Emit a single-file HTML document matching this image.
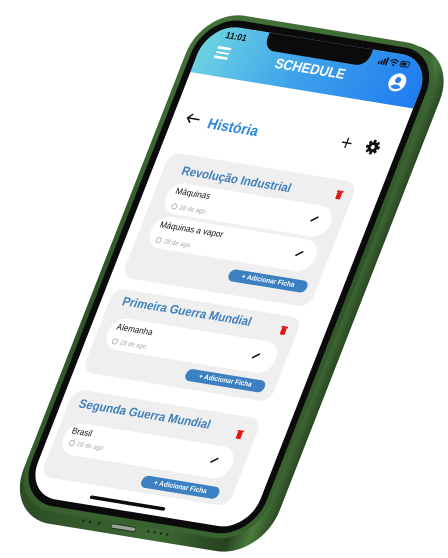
<!DOCTYPE html>
<html><head><meta charset="utf-8"><style>
html,body{margin:0;padding:0;background:#fff;}
body{width:448px;height:557px;overflow:hidden;position:relative;font-family:"Liberation Sans",Arial,sans-serif;}
#ph{position:absolute;left:0;top:0;width:282px;height:555px;transform:matrix(0.79,0.129,-0.332,0.85,209.6,22.8);transform-origin:0 0;}
.a{position:absolute;}
.card{position:absolute;background:#efefef;border-radius:14px;}
.item{position:absolute;background:#fff;border-radius:18px;}
.ttl{position:absolute;font-weight:bold;font-size:14px;color:#3f7fbb;line-height:14px;white-space:nowrap;}
.nm{position:absolute;font-size:10px;color:#111;line-height:10px;white-space:nowrap;}
.dt{position:absolute;font-size:7.5px;color:#a8a8a8;line-height:8px;white-space:nowrap;}
.dt i{display:inline-block;width:5px;height:5px;border:1px solid #a8a8a8;border-radius:50%;margin-right:3px;vertical-align:-1px;}
.btn{position:absolute;background:#3b80c0;border-radius:8px;color:#fff;font-weight:bold;font-size:8px;text-align:center;line-height:14px;height:14px;white-space:nowrap;}
.tr{position:absolute;width:6px;height:8px;background:#e01515;border-radius:1px;}
.tr:before{content:"";position:absolute;left:-1px;top:-2px;width:8px;height:1.5px;background:#e01515;}
.pen{position:absolute;width:10px;height:2px;background:#111;transform:rotate(-38deg);border-radius:1px;}
</style></head><body>
<div id="ph">
  <!-- side thickness -->
  <div class="a" style="left:-14px;top:-12px;width:324px;height:595px;border-radius:56px;background:linear-gradient(90deg,#2c4b24 0%,#3d6833 60%,#26421f 85%,#4b7b3f 93%,#2a4722 100%);"></div>
  <!-- front rim -->
  <div class="a" style="left:-14px;top:-14px;width:310px;height:583px;border-radius:52px;background:linear-gradient(160deg,#44733a,#2f5427 50%,#3a6530);"></div>
  <!-- bezel -->
  <div class="a" style="left:-8px;top:-8px;width:298px;height:571px;border-radius:46px;background:#0b0b0b;"></div>
  <!-- port + holes -->
  <div class="a" style="left:116px;top:571px;width:30px;height:4px;border-radius:3px;background:#9aa39a;border:1px solid #1d2f18;"></div>
  <div class="a" style="left:80px;top:572px;width:3px;height:3px;border-radius:50%;background:#1a2a15;"></div>
  <div class="a" style="left:88px;top:572px;width:3px;height:3px;border-radius:50%;background:#1a2a15;"></div>
  <div class="a" style="left:100px;top:572px;width:3px;height:3px;border-radius:50%;background:#1a2a15;"></div>
  <div class="a" style="left:162px;top:572px;width:3px;height:3px;border-radius:50%;background:#1a2a15;"></div>
  <div class="a" style="left:170px;top:572px;width:3px;height:3px;border-radius:50%;background:#1a2a15;"></div>
  <div class="a" style="left:178px;top:572px;width:3px;height:3px;border-radius:50%;background:#1a2a15;"></div>
  <div class="a" style="left:186px;top:572px;width:3px;height:3px;border-radius:50%;background:#1a2a15;"></div>
  <!-- screen -->
  <div class="a" style="left:0;top:0;width:282px;height:555px;border-radius:38px;background:#fff;overflow:hidden;">
    <div class="a" style="left:0;top:0;width:282px;height:58px;background:linear-gradient(100deg,#6ed5e2 0%,#3ea2ea 45%,#1f7cf0 100%);"></div>
    <div class="a" style="left:76px;top:0;width:131px;height:20px;background:#0b0b0b;border-radius:0 0 14px 14px;"></div>
    <div class="a" style="left:25px;top:6px;font-size:10.5px;font-weight:bold;color:#111;line-height:11px;">11:01</div>
    <svg class="a" style="left:218px;top:5px" width="42" height="11" viewBox="0 0 42 11">
      <rect x="1" y="7" width="2" height="3" fill="#111"/><rect x="4" y="5" width="2" height="5" fill="#111"/><rect x="7" y="3" width="2" height="7" fill="#111"/><rect x="10" y="1" width="2" height="9" fill="#111"/>
      <path d="M15 4.5 Q20 0 25 4.5 M17 6.5 Q20 4 23 6.5" stroke="#111" stroke-width="1.4" fill="none"/><circle cx="20" cy="8.6" r="1.2" fill="#111"/>
      <rect x="28" y="2.5" width="11" height="6" rx="2" fill="none" stroke="#111" stroke-width="1"/><rect x="29.5" y="4" width="6" height="3" fill="#111"/>
    </svg>
    <div class="a" style="left:21px;top:24px;width:17px;height:2.5px;background:#fff;border-radius:1px;"></div>
    <div class="a" style="left:21px;top:29.5px;width:17px;height:2.5px;background:#fff;border-radius:1px;"></div>
    <div class="a" style="left:21px;top:35px;width:17px;height:2.5px;background:#fff;border-radius:1px;"></div>
    <div class="a" style="left:0;top:26px;width:282px;text-align:center;font-size:16px;font-weight:bold;color:#fff;line-height:16px;">SCHEDULE</div>
    <svg class="a" style="left:240px;top:21px" width="22" height="22" viewBox="0 0 22 22">
      <circle cx="11" cy="11" r="10.5" fill="#fff"/>
      <circle cx="11" cy="8.3" r="3.6" fill="#2a7fe8"/>
      <path d="M4.5 16.5 Q11 10.5 17.5 16.5 Q11 21 4.5 16.5Z" fill="#2a7fe8"/>
    </svg>
    <!-- title row -->
    <svg class="a" style="left:15px;top:102px" width="20" height="14" viewBox="0 0 20 14">
      <path d="M18 7 H3 M8 2 L3 7 L8 12" stroke="#111" stroke-width="1.8" fill="none"/>
    </svg>
    <div class="a" style="left:45px;top:103px;font-size:17px;font-weight:bold;color:#2d87d8;line-height:17px;">História</div>
    <svg class="a" style="left:212px;top:101px" width="14" height="14" viewBox="0 0 14 14">
      <path d="M7 1 V13 M1 7 H13" stroke="#111" stroke-width="1.6"/>
    </svg>
    <svg class="a" style="left:243px;top:99px" width="18" height="18" viewBox="0 0 18 18">
      <g fill="#111"><circle cx="9" cy="9" r="6"/>
      <rect x="7.3" y="0.5" width="3.4" height="17" rx="0.6"/>
      <rect x="7.3" y="0.5" width="3.4" height="17" rx="0.6" transform="rotate(45 9 9)"/>
      <rect x="7.3" y="0.5" width="3.4" height="17" rx="0.6" transform="rotate(90 9 9)"/>
      <rect x="7.3" y="0.5" width="3.4" height="17" rx="0.6" transform="rotate(135 9 9)"/></g>
      <circle cx="9" cy="9" r="2.4" fill="#fff"/>
    </svg>

    <!-- card 1 -->
    <div class="card" style="left:13px;top:150px;width:238px;height:147px;"></div>
    <div class="ttl" style="left:36px;top:161px;">Revolução Industrial</div>
    <div class="tr" style="left:231px;top:164px;"></div>
    <div class="item" style="left:29px;top:182px;width:208px;height:36px;"></div>
    <div class="nm" style="left:38px;top:188px;">Máquinas</div>
    <div class="dt" style="left:40px;top:206px;"><i></i>28 de ago</div>
    <div class="pen" style="left:211px;top:197px;"></div>
    <div class="item" style="left:27px;top:222px;width:208px;height:37px;"></div>
    <div class="nm" style="left:35px;top:228px;">Máquinas a vapor</div>
    <div class="dt" style="left:37px;top:246px;"><i></i>28 de ago</div>
    <div class="pen" style="left:209px;top:238px;"></div>
    <div class="btn" style="left:140px;top:268px;width:99px;">+ Adicionar Ficha</div>

    <!-- card 2 -->
    <div class="card" style="left:10px;top:310px;width:238px;height:99px;"></div>
    <div class="ttl" style="left:26px;top:316px;">Primeira Guerra Mundial</div>
    <div class="tr" style="left:228px;top:324px;"></div>
    <div class="item" style="left:23px;top:342px;width:212px;height:37px;"></div>
    <div class="nm" style="left:31px;top:349px;">Alemanha</div>
    <div class="dt" style="left:32px;top:366px;"><i></i>28 de ago</div>
    <div class="pen" style="left:205px;top:359px;"></div>
    <div class="btn" style="left:135px;top:386px;width:100px;">+ Adicionar Ficha</div>

    <!-- card 3 -->
    <div class="card" style="left:9px;top:429px;width:238px;height:103px;"></div>
    <div class="ttl" style="left:22px;top:437px;">Segunda Guerra Mundial</div>
    <div class="tr" style="left:224px;top:447px;"></div>
    <div class="item" style="left:19px;top:466px;width:213px;height:37px;"></div>
    <div class="nm" style="left:26px;top:472px;">Brasil</div>
    <div class="dt" style="left:28px;top:486px;"><i></i>28 de ago</div>
    <div class="pen" style="left:204px;top:482px;"></div>
    <div class="btn" style="left:132px;top:512px;width:98px;">+ Adicionar Ficha</div>

    <div class="a" style="left:78px;top:544px;width:95px;height:4px;border-radius:2px;background:#0b0b0b;"></div>
  </div>
</div>
</body></html>
